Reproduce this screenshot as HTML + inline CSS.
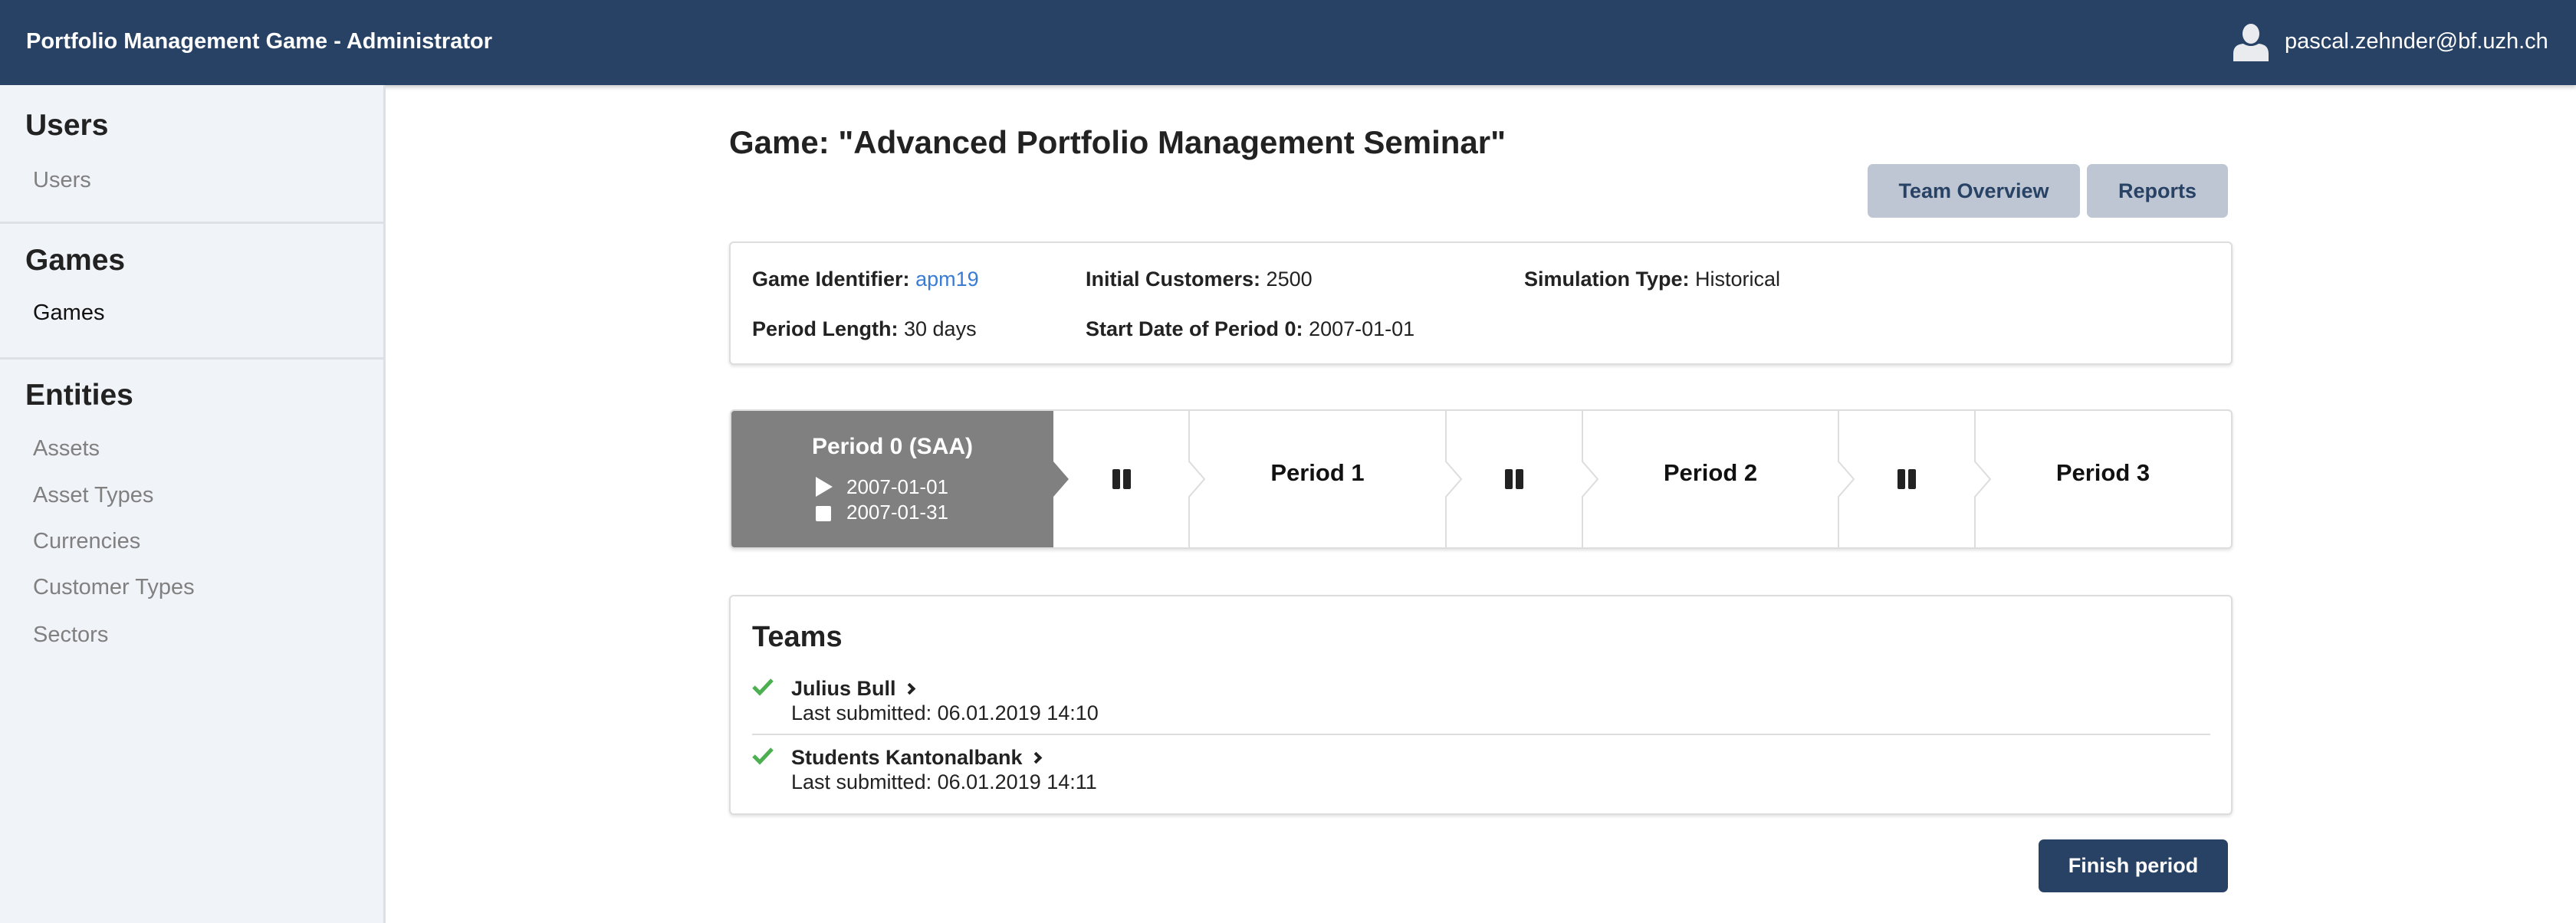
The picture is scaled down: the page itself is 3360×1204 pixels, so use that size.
<!DOCTYPE html>
<html><head><meta charset="utf-8"><style>
*{margin:0;padding:0;box-sizing:border-box}
body{width:3360px;height:1204px;overflow:hidden;background:#fff;font-family:"Liberation Sans",sans-serif;color:#222;position:relative}
.a{position:absolute;white-space:nowrap}
#hdr{left:0;top:0;width:3360px;height:111px;background:#284265;box-shadow:0 3px 5px rgba(0,0,0,.2)}
#side{left:0;top:111px;width:503px;height:1093px;background:#f0f3f8;border-right:3px solid #dde1e7}
.h{font-size:39px;font-weight:bold;color:#222;left:33px}
.it{font-size:29px;color:#808080;left:43px}
.div{left:0;width:503px;height:3px;background:#dde1e7}
.card{background:#fff;border:2px solid #ddd;border-radius:6px;box-shadow:0 2px 4px rgba(0,0,0,.12)}
.t{font-size:27px;color:#222}
.t b{font-weight:bold}
.btn{background:#bdc6d2;border-radius:7px;color:#284265;font-weight:bold;font-size:27px;display:flex;align-items:center;justify-content:center}
.seg{top:0;height:178px;display:flex;align-items:center;justify-content:center;font-weight:bold;font-size:31px;color:#111}
.pz{width:10px;height:26px;background:#222;border-radius:2px;display:inline-block;margin:0 2px}
.chev{display:inline-block;width:11px;height:11px;border-right:4px solid #222;border-top:4px solid #222;transform:rotate(45deg);margin-left:12px;vertical-align:3px}
</style></head><body>
<div class="a" id="hdr"></div>
<div class="a" style="left:34px;top:38px;color:#fff;font-size:29px;font-weight:bold">Portfolio Management Game - Administrator</div>
<svg class="a" style="left:2912px;top:30px" width="48" height="50" viewBox="0 0 48 50"><ellipse cx="24" cy="14" rx="11" ry="13" fill="#e9ebef"/><path d="M1 50 V40 Q1 28 14 27 Q24 33 34 27 Q47 28 47 40 V50 Z" fill="#e9ebef"/></svg>
<div class="a" style="left:2980px;top:38px;color:#fff;font-size:29px">pascal.zehnder@bf.uzh.ch</div>

<div class="a" id="side"></div>
<div class="a h" style="top:142px">Users</div>
<div class="a it" style="top:219px">Users</div>
<div class="a div" style="top:289px"></div>
<div class="a h" style="top:318px">Games</div>
<div class="a it" style="top:392px;color:#111">Games</div>
<div class="a div" style="top:466px"></div>
<div class="a h" style="top:494px">Entities</div>
<div class="a it" style="top:569px">Assets</div>
<div class="a it" style="top:630px">Asset Types</div>
<div class="a it" style="top:690px">Currencies</div>
<div class="a it" style="top:750px">Customer Types</div>
<div class="a it" style="top:812px">Sectors</div>

<div class="a" style="left:951px;top:162px;font-size:42px;font-weight:bold;color:#222">Game: "Advanced Portfolio Management Seminar"</div>
<div class="a btn" style="left:2436px;top:214px;width:277px;height:70px">Team Overview</div>
<div class="a btn" style="left:2722px;top:214px;width:184px;height:70px">Reports</div>

<div class="a card" style="left:951px;top:315px;width:1961px;height:161px"></div>
<div class="a t" style="left:981px;top:349px"><b>Game Identifier:</b> <span style="color:#3a7bd5">apm19</span></div>
<div class="a t" style="left:1416px;top:349px"><b>Initial Customers:</b> 2500</div>
<div class="a t" style="left:1988px;top:349px"><b>Simulation Type:</b> Historical</div>
<div class="a t" style="left:981px;top:414px"><b>Period Length:</b> 30 days</div>
<div class="a t" style="left:1416px;top:414px"><b>Start Date of Period 0:</b> 2007-01-01</div>

<div class="a card" style="left:952px;top:534px;width:1960px;height:182px;overflow:hidden">
 <div class="a" style="left:0;top:0;width:420px;height:178px;background:#808080"></div>
 <svg class="a" style="left:0;top:0" width="1960" height="178">
  <polygon points="420,0 420,66 440,89 420,112 420,178 418,178 418,0" fill="#808080"/>
  <g fill="none" stroke="#ddd" stroke-width="2">
   <path d="M597,0 V66 L617,89 L597,112 V178"/>
   <path d="M932,0 V66 L952,89 L932,112 V178"/>
   <path d="M1110,0 V66 L1130,89 L1110,112 V178"/>
   <path d="M1444,0 V66 L1464,89 L1444,112 V178"/>
   <path d="M1622,0 V66 L1642,89 L1622,112 V178"/>
  </g>
 </svg>
 <div class="a" style="left:0;top:30px;width:420px;text-align:center;color:#fff;font-weight:bold;font-size:30px">Period 0 (SAA)</div>
 <svg class="a" style="left:108px;top:86px" width="26" height="60"><polygon points="2,0 24,13 2,26" fill="#fff"/><rect x="2" y="38" width="20" height="20" rx="2" fill="#fff"/></svg>
 <div class="a" style="left:150px;top:83px;color:#fff;font-size:26px;line-height:33px">2007-01-01<br>2007-01-31</div>
 <div class="a seg" style="left:420px;width:177px"><span class="pz"></span><span class="pz"></span></div>
 <div class="a seg" style="left:597px;width:335px;margin-top:-8px">Period 1</div>
 <div class="a seg" style="left:932px;width:178px"><span class="pz"></span><span class="pz"></span></div>
 <div class="a seg" style="left:1110px;width:334px;margin-top:-8px">Period 2</div>
 <div class="a seg" style="left:1444px;width:178px"><span class="pz"></span><span class="pz"></span></div>
 <div class="a seg" style="left:1622px;width:334px;margin-top:-8px">Period 3</div>
</div>

<div class="a card" style="left:951px;top:776px;width:1961px;height:287px"></div>
<div class="a" style="left:981px;top:810px;font-size:38px;font-weight:bold">Teams</div>
<svg class="a" style="left:980px;top:884px" width="30" height="24"><path d="M3 12 L11 20 L27 3" fill="none" stroke="#4caf50" stroke-width="5"/></svg>
<div class="a t" style="left:1032px;top:883px;font-weight:bold">Julius Bull<span class="chev"></span></div>
<div class="a t" style="left:1032px;top:915px">Last submitted: 06.01.2019 14:10</div>
<div class="a" style="left:981px;top:957px;width:1902px;height:2px;background:#ddd"></div>
<svg class="a" style="left:980px;top:974px" width="30" height="24"><path d="M3 12 L11 20 L27 3" fill="none" stroke="#4caf50" stroke-width="5"/></svg>
<div class="a t" style="left:1032px;top:973px;font-weight:bold">Students Kantonalbank<span class="chev"></span></div>
<div class="a t" style="left:1032px;top:1005px">Last submitted: 06.01.2019 14:11</div>

<div class="a btn" style="left:2659px;top:1095px;width:247px;height:69px;background:#284265;color:#fff">Finish period</div>
</body></html>
